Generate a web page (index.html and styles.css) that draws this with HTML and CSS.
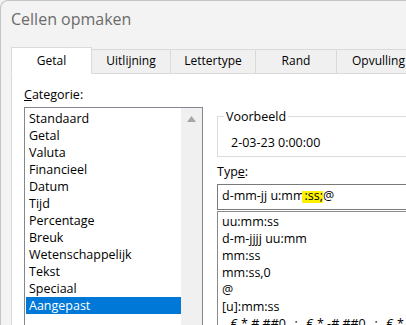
FILE: index.html
```html
<!DOCTYPE html>
<html lang="nl">
<head>
<meta charset="utf-8">
<title>Cellen opmaken</title>
<link rel="stylesheet" href="styles.css">
</head>
<body>
<div class="window">
  <div class="title">Cellen opmaken</div>
  <div class="tabs">
    <div class="tab active" style="width:81px">Getal</div>
    <div class="tab" style="width:79px">Uitlijning</div>
    <div class="tab" style="width:85px">Lettertype</div>
    <div class="tab" style="width:81px">Rand</div>
    <div class="tab" style="width:84px">Opvulling</div>
    <div class="tab-fill"></div>
  </div>
  <div class="panel">
    <div class="col-left">
      <div class="label"><u>C</u>ategorie:</div>
      <div class="listbox">
        <div class="items">
          <div class="item">Standaard</div>
          <div class="item">Getal</div>
          <div class="item">Valuta</div>
          <div class="item">Financieel</div>
          <div class="item">Datum</div>
          <div class="item">Tijd</div>
          <div class="item">Percentage</div>
          <div class="item">Breuk</div>
          <div class="item">Wetenschappelijk</div>
          <div class="item">Tekst</div>
          <div class="item">Speciaal</div>
          <div class="item selected">Aangepast</div>
        </div>
        <div class="scrollbar">
          <svg class="arrow" width="9" height="6" viewBox="0 0 9 6"><polygon points="4.5,0 9,6 0,6" fill="#a6a6a6"/></svg>
        </div>
      </div>
    </div>
    <div class="col-right">
      <fieldset class="group">
        <legend>Voorbeeld</legend>
        <div class="sample">2-03-23 0:00:00</div>
      </fieldset>
      <div class="label type-label">Typ<u>e</u>:</div>
      <div class="input">d-mm-jj u:mm<span class="mark">:ss;</span>@</div>
      <div class="formats">
        <div class="item">uu:mm:ss</div>
        <div class="item">d-m-jjjj uu:mm</div>
        <div class="item">mm:ss</div>
        <div class="item">mm:ss,0</div>
        <div class="item">@</div>
        <div class="item">[u]:mm:ss</div>
        <div class="item">_ € * # ##0_ ;_ € * -# ##0_ ;_ € * "-"_ ;_ @_ </div>
      </div>
    </div>
  </div>
</div>
</body>
</html>
```

FILE: styles.css
```css
* { box-sizing: border-box; }
html, body {
  margin: 0;
  padding: 0;
}
body {
  width: 406px;
  height: 325px;
  overflow: hidden;
  background: #f3f3f3;
  font-family: "Open Sans", "Noto Sans", sans-serif;
  font-size: 12.5px;
  color: #000;
}
.window {
  height: 340px;
  width: 430px;
  border-left: 1px solid #c4c4c4;
  border-top: 1px solid #c4c4c4;
  border-top-left-radius: 8px;
  background: #f3f3f3;
  overflow: hidden;
}
.title {
  padding: 7px 0 0 10px;
  height: 29px;
  line-height: 22px;
  font-size: 16px;
  color: #6b6b6b;
}
.tabs {
  margin-top: 17px;
  height: 27px;
  display: flex;
  align-items: flex-end;
  padding-left: 10px;
}
.tab {
  height: 25px;
  flex: none;
  border: 1px solid #dadada;
  border-left: none;
  background: #f0f0f0;
  display: flex;
  align-items: flex-end;
  justify-content: center;
  padding-bottom: 4px;
  font-size: 12px;
  line-height: 16px;
}
.tab.active {
  height: 27px;
  border-left: 1px solid #dadada;
  border-bottom-color: #fff;
  background: #fff;
}
.tab-fill {
  flex: 1;
  border-bottom: 1px solid #dadada;
}
.panel {
  margin-left: 10px;
  height: 260px;
  background: #fff;
  border-left: 1px solid #dadada;
  display: grid;
  grid-template-columns: 179px 240px;
  column-gap: 14px;
  padding: 12px 0 0 12px;
  overflow: hidden;
}
.label {
  line-height: 17px;
  height: 17px;
}
.listbox {
  margin-top: 4px;
  height: 240px;
  border: 1px solid #828790;
  display: flex;
}
.items {
  flex: 1;
  padding: 2px 0 0 1px;
}
.item {
  line-height: 17px;
  height: 17px;
  padding-left: 3px;
  white-space: pre;
}
.item.selected {
  background: #0078d7;
  color: #fff;
}
.scrollbar {
  width: 21px;
  background: #f0f0f0;
  display: flex;
  justify-content: center;
  align-items: flex-start;
  padding-top: 8px;
}
.arrow { display: block; }
.group {
  margin: 22px 0 0 0;
  padding: 9px 13px 5px 13px;
  border: 1px solid #dcdcdc;
  min-inline-size: 0;
}
.group legend {
  padding: 0 2px;
  margin-left: -7px;
  line-height: 17px;
}
.sample {
  line-height: 17px;
  height: 17px;
}
.type-label {
  margin-top: 6px;
}
.input {
  margin-top: 4px;
  height: 26px;
  border: 1px solid #7a7a7a;
  padding: 2px 4px 0 4px;
  line-height: 17px;
  white-space: pre;
}
.mark {
  margin-left: -3px;
  padding-left: 3px;
  background: linear-gradient(to bottom, transparent 4px, #fff200 4px, #fff200 16px, transparent 16px);
}
.formats {
  margin-top: 1px;
  border: 1px solid #8a8a8a;
  padding: 1px 0 0 1px;
  height: 200px;
}
```
